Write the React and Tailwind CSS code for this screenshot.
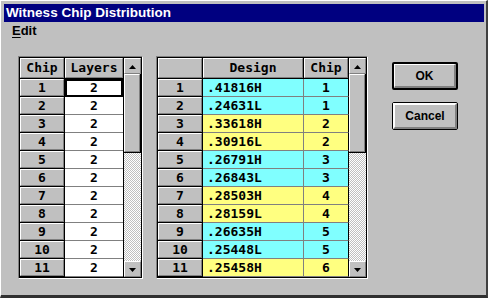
import React from 'react';

const mono = "font-['DejaVu_Sans_Mono',monospace] font-bold text-[13px] text-black";

const designRows = [
  { n: 1, design: '.41816H', chip: 1, color: 'bg-[#80ffff]' },
  { n: 2, design: '.24631L', chip: 1, color: 'bg-[#80ffff]' },
  { n: 3, design: '.33618H', chip: 2, color: 'bg-[#ffff80]' },
  { n: 4, design: '.30916L', chip: 2, color: 'bg-[#ffff80]' },
  { n: 5, design: '.26791H', chip: 3, color: 'bg-[#80ffff]' },
  { n: 6, design: '.26843L', chip: 3, color: 'bg-[#80ffff]' },
  { n: 7, design: '.28503H', chip: 4, color: 'bg-[#ffff80]' },
  { n: 8, design: '.28159L', chip: 4, color: 'bg-[#ffff80]' },
  { n: 9, design: '.26635H', chip: 5, color: 'bg-[#80ffff]' },
  { n: 10, design: '.25448L', chip: 5, color: 'bg-[#80ffff]' },
  { n: 11, design: '.25458H', chip: 6, color: 'bg-[#ffff80]' },
];

// raised 3d box, win 3.1 style
function Raised({ className = '', children }) {
  return (
    <div className={`flex items-center justify-center bg-[#c0c0c0] border border-t-white border-l-white border-r-[#808080] border-b-[#808080] ${className}`}>
      {children}
    </div>
  );
}

function HeadCell({ w, children }) {
  return (
    <div className={`${w} h-full border-r border-b border-black`}>
      <Raised className={`h-full w-full ${mono}`}>{children}</Raised>
    </div>
  );
}

function Arrow({ down }) {
  return (
    <svg width="7" height="4" viewBox="0 0 7 4">
      {down ? <polygon points="0,0 7,0 3.5,4" fill="#000" /> : <polygon points="0,4 7,4 3.5,0" fill="#000" />}
    </svg>
  );
}

function ScrollBar() {
  return (
    <div className="w-[17px] flex flex-col">
      <Raised className="h-[16px] pt-[1px]"><Arrow /></Raised>
      <div className="h-[79px] border-r border-b border-black">
        <Raised className="h-full w-full" />
      </div>
      <div className="flex-1 bg-[repeating-conic-gradient(#c0c0c0_0%_25%,#ffffff_0%_50%)] bg-[length:2px_2px]" />
      <Raised className="h-[16px] pt-[1px]"><Arrow down /></Raised>
    </div>
  );
}

function Frame({ children }) {
  return (
    <div className="border border-t-[#808080] border-l-[#808080] border-r-white border-b-white">
      <div className="border border-black flex">{children}</div>
    </div>
  );
}

export default function App() {
  return (
    <div className="w-[488px] h-[298px] bg-[#c0c0c0] overflow-hidden">
      <div className="w-[488px] h-[298px] bg-[#c0c0c0] border-t border-l border-white border-r-2 border-r-[#404040] border-b-[3px] border-b-[#303030] pt-[3px] pl-[3px] pr-[2px] flex flex-col">
        {/* title */}
        <div className="h-[18px] bg-[#000080] text-white font-['Liberation_Sans',Arial,sans-serif] font-bold text-[13.5px] leading-[18px] pl-[2px]">
          Witness Chip Distribution
        </div>
        {/* menu */}
        <div className="h-[18px] flex items-center pl-[8px] font-['Liberation_Sans',Arial,sans-serif] font-bold text-[13px] text-black">
          <span><span className="underline underline-offset-2">E</span>dit</span>
        </div>

        <div className="flex mt-[16px] ml-[14px]">
          {/* left grid */}
          <Frame>
            <div className="w-[104px] flex flex-col">
              <div className="flex h-[21px]">
                <HeadCell w="w-[45px]">Chip</HeadCell>
                <HeadCell w="w-[59px]">Layers</HeadCell>
              </div>
              {designRows.map((r) => (
                <div key={r.n} className="flex h-[18px]">
                  <HeadCell w="w-[45px]">{r.n}</HeadCell>
                  <div className="w-[59px] h-full border-r border-r-black">
                    <div className={`h-full w-full bg-white flex items-center justify-center ${mono} ${r.n === 1 ? 'border-2 border-black' : 'border-b border-b-[#808080]'}`}>
                      2
                    </div>
                  </div>
                </div>
              ))}
            </div>
            <ScrollBar />
          </Frame>

          {/* right grid */}
          <div className="ml-[13px]">
            <Frame>
              <div className="w-[191px] flex flex-col">
                <div className="flex h-[21px]">
                  <HeadCell w="w-[45px]"></HeadCell>
                  <HeadCell w="w-[101px]">Design</HeadCell>
                  <HeadCell w="w-[45px]">Chip</HeadCell>
                </div>
                {designRows.map((r) => (
                  <div key={r.n} className="flex h-[18px]">
                    <HeadCell w="w-[45px]">{r.n}</HeadCell>
                    <div className={`w-[101px] h-full ${r.color} border-r border-b border-[#808080] flex items-center pl-[4px] ${mono}`}>
                      {r.design}
                    </div>
                    <div className={`w-[45px] h-full ${r.color} border-r border-r-black border-b border-b-[#808080] flex items-center justify-center ${mono}`}>
                      {r.chip}
                    </div>
                  </div>
                ))}
              </div>
              <ScrollBar />
            </Frame>
          </div>

          {/* buttons */}
          <div className="ml-[24px] mt-[6px] flex flex-col gap-[12px] font-['Liberation_Sans',Arial,sans-serif] font-bold text-[12px] text-black">
            <div className="w-[66px] h-[28px] border-2 border-black rounded-[2px]">
              <Raised className="h-full w-full border-b-2 border-r-2">OK</Raised>
            </div>
            <div className="w-[66px] h-[28px] border border-black rounded-[2px]">
              <div className="h-full w-full flex items-center justify-center bg-[#c0c0c0] border-2 border-t-white border-l-white border-r-[#808080] border-b-[#808080]">
                Cancel
              </div>
            </div>
          </div>
        </div>
      </div>
    </div>
  );
}
